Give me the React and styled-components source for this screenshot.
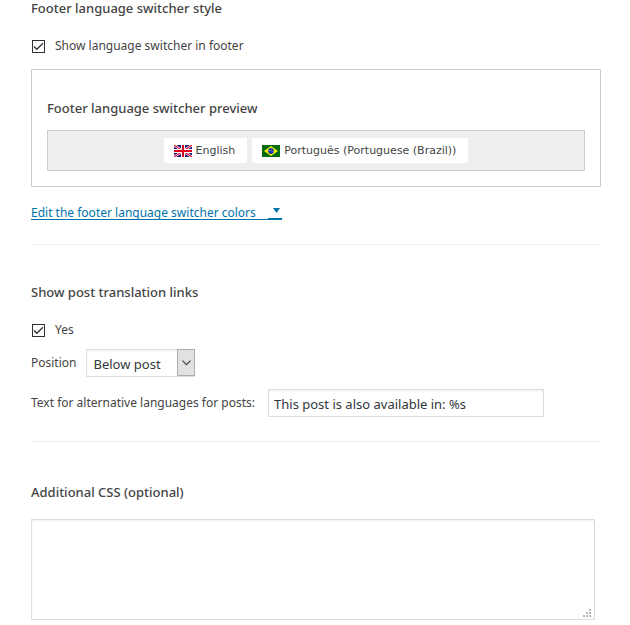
import React, { useState } from 'react';
import styled, { createGlobalStyle } from 'styled-components'

const GlobalStyle = createGlobalStyle`
    *, *::before, *::after {
        box-sizing: border-box;
    }

    body {
        margin: 0;
        background: #fff;
        color: #444;
        font-family: "Noto Sans", "Open Sans", sans-serif;
        font-size: 12px;
        line-height: 18px;
    }
`

const Page = styled.main`
    padding: 0 29px 5px 31px;
`

const Section = styled.section`
    padding: ${props => props.$top || "0"} 0 24px;
    border-bottom: 1px solid #eee;

    &:last-of-type {
        padding-bottom: 0;
        border-bottom: none;
    }
`

const Heading = styled.h4`
    margin: 0 0 ${props => props.$bottom || "21px"};
    font-size: 13px;
    font-weight: 500;
    line-height: 16px;
`

const CheckLabel = styled.label`
    display: flex;
    align-items: center;
    gap: 9px;
`

const CheckBox = styled.span`
    position: relative;
    width: 15px;
    height: 13px;
    padding-left: 1px;

    input {
        display: block;
        appearance: none;
        width: 13px;
        height: 13px;
        margin: 0;
        border: 1px solid #333;
        background: #fff;
    }

    svg {
        position: absolute;
        top: 0;
        left: 1px;
        display: none;
        pointer-events: none;
    }

    input:checked + svg {
        display: block;
    }
`

const PreviewBox = styled.div`
    margin: 14px 0 19px;
    padding: 30px 15px 15px;
    border: 1px solid #ccc;
`

const LanguageBar = styled.div`
    display: flex;
    justify-content: center;
    gap: 5px;
    padding: 7px;
    border: 1px solid #cdcdcd;
    background: #eee;
`

const LanguageItem = styled.a`
    display: flex;
    align-items: center;
    gap: 4px;
    height: 25px;
    padding: 0 12px 0 10px;
    background: #fff;
    color: #444;
    font-family: Verdana, "DejaVu Sans", sans-serif;
    font-size: 11px;
    text-decoration: none;
`

const ColorsLink = styled.a`
    display: flex;
    justify-content: space-between;
    gap: 12px;
    width: fit-content;
    border-bottom: 1px solid #0073aa;
    color: #0073aa;
    line-height: 13px;
    text-decoration: none;
`

const Field = styled.div`
    display: flex;
    align-items: center;
    gap: ${props => props.$gap};
    margin-top: ${props => props.$top};
`

const SelectWrap = styled.div`
    position: relative;
    width: 109px;
    height: 28px;

    select {
        appearance: none;
        width: 100%;
        height: 100%;
        padding: 2px 24px 0 6px;
        border: 1px solid #ddd;
        border-radius: 0;
        background: #fff;
        box-shadow: inset 0 1px 2px rgba(0, 0, 0, .07);
        color: #32373c;
        font: inherit;
        font-size: 13px;
    }
`

const SelectArrow = styled.span`
    position: absolute;
    top: 0;
    right: 0;
    display: flex;
    align-items: center;
    justify-content: center;
    width: 18px;
    height: 27px;
    border: 1px solid #adadad;
    background: #e1e1e1;
    pointer-events: none;
`

const TextInput = styled.input`
    flex: 0 1 276px;
    min-width: 0;
    height: 28px;
    padding: 4px 5px 2px;
    border: 1px solid #ddd;
    background: #fff;
    box-shadow: inset 0 1px 2px rgba(0, 0, 0, .07);
    color: #32373c;
    font: inherit;
    font-size: 13px;
`

const TextAreaWrap = styled.div`
    position: relative;
    width: 99%;

    textarea {
        display: block;
        width: 100%;
        height: 101px;
        padding: 2px 6px;
        resize: none;
        border: 1px solid #ddd;
        background: #fff;
        box-shadow: inset 0 1px 2px rgba(0, 0, 0, .07);
        color: #32373c;
        font: inherit;
        font-size: 13px;
    }

    svg {
        position: absolute;
        right: 4px;
        bottom: 3px;
        pointer-events: none;
    }
`

const FlagGB = () => (
    <svg width="18" height="12" viewBox="0 0 18 12" aria-hidden="true">
        <rect width="18" height="12" fill="#1c1c80" />
        <path d="M0 0L18 12M18 0L0 12" stroke="#fff" strokeWidth="2.4" />
        <path d="M0 0L18 12M18 0L0 12" stroke="#e01030" strokeWidth="1.1" />
        <path d="M9 0V12M0 6H18" stroke="#fff" strokeWidth="4" />
        <path d="M9 0V12M0 6H18" stroke="#e00020" strokeWidth="2" />
    </svg>
)

const FlagBR = () => (
    <svg width="18" height="12" viewBox="0 0 18 12" aria-hidden="true">
        <rect width="18" height="12" fill="#006c0c" />
        <path d="M9 1L16 6L9 11L2 6Z" fill="#f8f400" />
        <circle cx="9" cy="6" r="2.9" fill="#1c38a8" />
        <path d="M6.4 5.3Q9.5 4.9 11.5 7.1" fill="none" stroke="#7f9ce0" strokeWidth=".6" />
    </svg>
)

const languages = [
    { code: "en", name: "English", Flag: FlagGB },
    { code: "pt-br", name: "Português (Portuguese (Brazil))", Flag: FlagBR }
]

const CheckOption = ({ children }) => {
    const [checked, setChecked] = useState(true)

    return (
        <CheckLabel>
            <CheckBox>
                <input type="checkbox" checked={checked} onChange={e => setChecked(e.target.checked)} />
                <svg width="13" height="13" viewBox="0 0 13 13" aria-hidden="true">
                    <path d="M2 6.5L4.8 9.3L11 3.3" fill="none" stroke="#333" strokeWidth="1.3" />
                </svg>
            </CheckBox>
            {children}
        </CheckLabel>
    )
}

const App = () => {
    const [position, setPosition] = useState("below")
    const [altText, setAltText] = useState("This post is also available in: %s")
    const [css, setCss] = useState("")

    return (
        <Page>
            <GlobalStyle />
            <Section>
                <Heading>Footer language switcher style</Heading>
                <CheckOption>Show language switcher in footer</CheckOption>
                <PreviewBox>
                    <Heading $bottom="14px">Footer language switcher preview</Heading>
                    <LanguageBar>
                        {languages.map(({ code, name, Flag }) => (
                            <LanguageItem key={code} href={"#" + code}>
                                <Flag />
                                {name}
                            </LanguageItem>
                        ))}
                    </LanguageBar>
                </PreviewBox>
                <ColorsLink href="#colors">
                    Edit the footer language switcher colors
                    <svg width="14" height="13" viewBox="0 0 14 13" aria-hidden="true">
                        <path d="M5 2H12L8.5 7Z" fill="#0073aa" />
                        <path d="M0 12H14V13H0Z" fill="#0073aa" />
                    </svg>
                </ColorsLink>
            </Section>

            <Section $top="39px">
                <Heading>Show post translation links</Heading>
                <CheckOption>Yes</CheckOption>
                <Field $top="10px" $gap="10px">
                    <label htmlFor="position">Position</label>
                    <SelectWrap>
                        <select id="position" value={position} onChange={e => setPosition(e.target.value)}>
                            <option value="above">Above post</option>
                            <option value="below">Below post</option>
                        </select>
                        <SelectArrow>
                            <svg width="9" height="6" viewBox="0 0 9 6" aria-hidden="true">
                                <path d="M.5 .7L4.5 4.7L8.5 .7" fill="none" stroke="#444" strokeWidth="1.2" />
                            </svg>
                        </SelectArrow>
                    </SelectWrap>
                </Field>
                <Field $top="12px" $gap="13px">
                    <label htmlFor="alt-text">Text for alternative languages for posts:</label>
                    <TextInput id="alt-text" type="text" value={altText} onChange={e => setAltText(e.target.value)} />
                </Field>
            </Section>

            <Section $top="42px">
                <Heading $bottom="19px">
                    <label htmlFor="additional-css">Additional CSS (optional)</label>
                </Heading>
                <TextAreaWrap>
                    <textarea id="additional-css" value={css} onChange={e => setCss(e.target.value)} />
                    <svg width="8" height="8" viewBox="0 0 8 8" fill="#b8b8b8" aria-hidden="true">
                        <path d="M6 0h2v2h-2zM3 3h2v2h-2zM6 3h2v2h-2zM0 6h2v2h-2zM3 6h2v2h-2zM6 6h2v2h-2z" />
                    </svg>
                </TextAreaWrap>
            </Section>
        </Page>
    )
}

export default App;
